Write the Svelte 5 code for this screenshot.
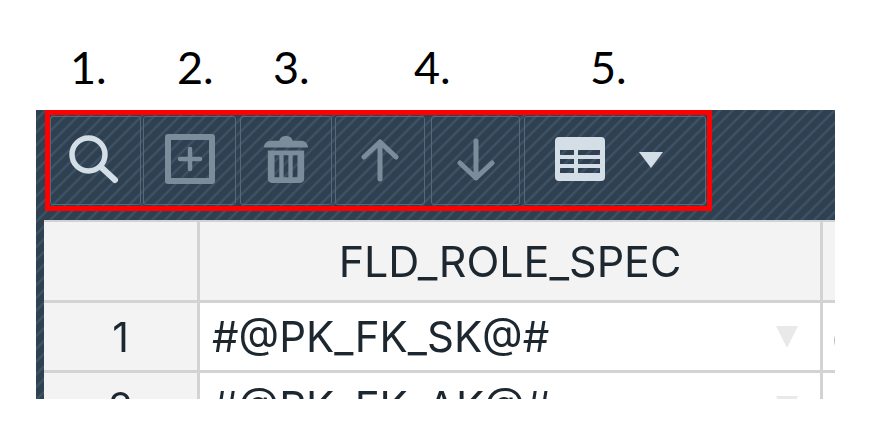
<script>
  const labels = [
    { text: '1.', w: 107 },
    { text: '2.', w: 96 },
    { text: '3.', w: 141 },
    { text: '4.', w: 176 },
    { text: '5.', w: 60 }
  ];
  const rows = [
    { n: '1', v: '#@PK_FK_SK@#', c: 'c' },
    { n: '2', v: '#@PK_FK_AK@#', c: 'c' }
  ];
</script>

<div class="page">
  <div class="labels">
    {#each labels as l}
      <span class="label" style="width:{l.w}px">{l.text}</span>
    {/each}
  </div>

  <div class="panel">
    <div class="toolbar">
      <div class="btn b1">
        <svg width="54" height="54" viewBox="0 0 54 54"><circle cx="23.5" cy="23.5" r="16.5" fill="none" stroke="#d3dee6" stroke-width="5.500"/><path d="M36 36 L50 49" stroke="#d3dee6" stroke-width="6" stroke-linecap="round"/></svg>
      </div>
      <div class="btn b2">
        <svg width="50" height="50" viewBox="0 0 50 50"><path fill-rule="evenodd" fill="#7b8d9b" d="M3 0H47a3 3 0 0 1 3 3V47a3 3 0 0 1-3 3H3a3 3 0 0 1-3-3V3a3 3 0 0 1 3-3ZM6 6V44H44V6Z"/><path d="M25 15V35M15 25H35" stroke="#7b8d9b" stroke-width="4.500" stroke-linecap="round"/></svg>
      </div>
      <div class="btn b3">
        <svg width="44" height="50" viewBox="0 0 46 50"><path fill="#7b8d9b" d="M0 13C0 8 4 6 8 6H16C17 2 20 1 23 1S29 2 30 6H38C42 6 46 8 46 13ZM4 16H42V46C42 48 40 50 38 50H8C6 50 4 48 4 46ZM11 21V44H16V21ZM20.500 21V44H25.500V21ZM30 21V44H35V21Z" fill-rule="evenodd"/></svg>
      </div>
      <div class="btn b4">
        <svg width="38" height="44" viewBox="0 0 38 44"><path d="M19 41V4M3 19 19 4 35 19" fill="none" stroke="#7b8d9b" stroke-width="5" stroke-linecap="round" stroke-linejoin="round"/></svg>
      </div>
      <div class="btn b5">
        <svg width="38" height="44" viewBox="0 0 38 44"><path d="M19 3V40M3 25 19 40 35 25" fill="none" stroke="#7b8d9b" stroke-width="5" stroke-linecap="round" stroke-linejoin="round"/></svg>
      </div>
      <div class="btn b6">
        <svg class="grid-icon" width="50" height="44" viewBox="0 0 50 44"><path fill-rule="evenodd" fill="#d3dee6" d="M4 0H46a4 4 0 0 1 4 4V40a4 4 0 0 1-4 4H4a4 4 0 0 1-4-4V4a4 4 0 0 1 4-4ZM5 13V18H19V13ZM23 13V18H45V13ZM5 22V27H19V22ZM23 22V27H45V22ZM5 31V36H19V31ZM23 31V36H45V31Z"/></svg>
        <svg class="caret" width="26" height="18" viewBox="0 0 26 18"><path d="M1 1H25L13 17Z" fill="#d3dee6"/></svg>
      </div>
    </div>

    <div class="sheet">
      <div class="tr head">
        <div class="idx"></div>
        <div class="cell main">FLD_ROLE_SPEC</div>
        <div class="cell rest"></div>
      </div>
      {#each rows as r}
        <div class="tr row">
          <div class="idx">{r.n}</div>
          <div class="cell main val">
            <span>{r.v}</span>
            <svg width="22" height="22" viewBox="0 0 22 22"><path d="M0 0H22L11 22Z" fill="#e9e9e9"/></svg>
          </div>
          <div class="cell rest val">{r.c}</div>
        </div>
      {/each}
    </div>

    <div class="highlight"></div>
  </div>
</div>

<style>
  :global(body) {
    margin: 0;
    background: #fff;
  }
  .page {
    width: 876px;
    height: 441px;
    overflow: hidden;
    background: #fff;
    padding: 42px 41px 0 36px;
    box-sizing: border-box;
  }
  .labels {
    display: flex;
    height: 68px;
    padding-left: 34px;
  }
  .label {
    font-family: Lato, "Open Sans", sans-serif;
    font-size: 45px;
    line-height: 50px;
    color: #000;
    flex: none;
  }
  .panel {
    position: relative;
    width: 799px;
    height: 289px;
    overflow: hidden;
    background-color: #2f4050;
    background-image: repeating-linear-gradient(
      135deg,
      #2f4050 0,
      #2f4050 5px,
      #40566a 7px,
      #2f4050 9px
    );
  }
  .toolbar {
    display: flex;
    gap: 3px;
    height: 89px;
    padding: 6px 0 0 14px;
  }
  .btn {
    flex: none;
    box-sizing: border-box;
    height: 89px;
    border: 1px solid #56697a;
    border-radius: 3px;
    display: flex;
    align-items: center;
    justify-content: center;
    filter: blur(0.5px);
  }
  .b1 { width: 91px; }
  .b1 svg { margin: -6px 0 0 -7px; }
  .b2 { width: 93px; margin-left: -1px; }
  .b2 svg { margin-top: -3px; }
  .b3 { width: 92px; margin-left: 1px; }
  .b3 svg { margin-top: -3px; }
  .b4 { width: 90px; }
  .b4 svg { margin-top: -2px; }
  .b5 { width: 89px; margin-left: 3px; }
  .b5 svg { margin-top: -2px; }
  .b6 { width: 182px; gap: 33px; margin-left: 1px; padding-right: 12px; }
  .b6 .grid-icon { margin-top: -3px; }
  .b6 .caret { margin-top: -1px; }
  .sheet {
    margin: 15px 0 0 8px;
    background: #fff;
    border-top: 2px solid #cfd3d6;
    filter: blur(0.4px);
  }
  .tr {
    display: grid;
    grid-template-columns: 156px 623px 1fr;
    border-bottom: 3px solid #d3d3d3;
  }
  .head {
    height: 78px;
    background: #f3f3f3;
  }
  .row {
    height: 67px;
  }
  .idx {
    background: #f3f3f3;
    border-right: 3px solid #d3d3d3;
    color: #1d2730;
    font-family: Inter, "Liberation Sans", sans-serif;
    font-size: 41px;
    display: flex;
    align-items: center;
    justify-content: center;
    box-sizing: border-box;
  }
  .cell {
    font-family: Inter, "Liberation Sans", sans-serif;
    color: #1d2730;
    font-size: 43px;
    box-sizing: border-box;
    display: flex;
    align-items: center;
    white-space: nowrap;
    overflow: hidden;
  }
  .main {
    border-right: 3px solid #d3d3d3;
  }
  .head .main {
    justify-content: center;
  }
  .val {
    justify-content: space-between;
    padding: 0 22px 0 12px;
    font-size: 42px;
  }
  .rest.val {
    padding: 0 0 0 9px;
    color: #b9b9b9;
  }
  .head .rest { background: #f3f3f3; }
  .highlight {
    position: absolute;
    left: 9px;
    top: 0;
    width: 667px;
    height: 101px;
    box-sizing: border-box;
    border: 5px solid #ff0000;
  }
</style>
